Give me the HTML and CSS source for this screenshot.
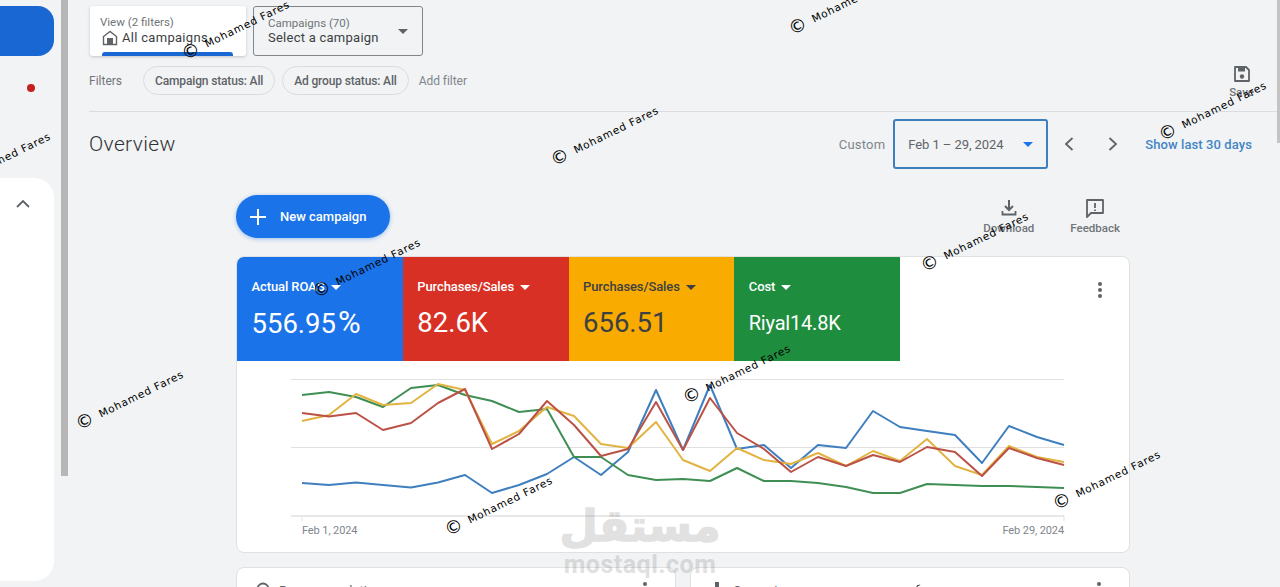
FILE: index.html
```html
<!DOCTYPE html>
<html lang="en">
<head>
  <meta charset="UTF-8">
  <meta name="viewport" content="width=device-width, initial-scale=1.0">
  <title>Overview - Campaigns</title>
  <link rel="stylesheet" href="styles.css">
</head>
<body>
  <div class="app">
    <div class="rail">
      <div class="rail-pill"></div>
      <div class="rail-dot"></div>
      <div class="rail-panel">
        <svg class="rail-chevron" width="16" height="10" viewBox="0 0 16 10"><path d="M2 8l6-6 6 6" fill="none" stroke="#5f6368" stroke-width="1.8"/></svg>
      </div>
    </div>
    <div class="rail-bar"></div>

    <div class="main">
      <div class="picker-row">
        <div class="view-card">
          <div class="small-label">View (2 filters)</div>
          <div class="view-name">
            <svg width="16" height="16" viewBox="0 0 16 16"><path d="M8 1.5L1.5 6.5v8h13v-8z" fill="none" stroke="#5f6368" stroke-width="1.4"/><rect x="5" y="8" width="6" height="6.5" fill="#5f6368"/></svg>
            All campaigns
          </div>
          <div class="view-bar"></div>
        </div>
        <div class="campaign-select">
          <div>
            <div class="small-label">Campaigns (70)</div>
            <div class="select-value">Select a campaign</div>
          </div>
          <span class="caret caret-grey"></span>
        </div>
      </div>

      <div class="filter-row">
        <span class="filter-label">Filters</span>
        <span class="chip">Campaign status: All</span>
        <span class="chip">Ad group status: All</span>
        <span class="add-filter">Add filter</span>
        <div class="tool save-tool">
          <svg width="20" height="20" viewBox="0 0 20 20"><path d="M3 3h11l3 3v11H3z" fill="none" stroke="#5f6368" stroke-width="1.8" stroke-linejoin="round"/><rect x="6" y="4" width="7" height="3.5" fill="#5f6368"/><circle cx="10" cy="12.5" r="2.2" fill="#5f6368"/></svg>
          <span>Save</span>
        </div>
      </div>

      <div class="overview-row">
        <h1>Overview</h1>
        <span class="custom-label">Custom</span>
        <div class="date-box">
          <span>Feb 1 – 29, 2024</span>
          <span class="caret caret-blue"></span>
        </div>
        <svg class="pager" width="14" height="16" viewBox="0 0 14 16"><path d="M10.5 2L4 8l6.500 6" fill="none" stroke="#5f6368" stroke-width="1.8"/></svg>
        <svg class="pager" width="14" height="16" viewBox="0 0 14 16"><path d="M3.500 2L10 8l-6.500 6" fill="none" stroke="#5f6368" stroke-width="1.800"/></svg>
        <a class="last-days">Show last 30 days</a>
      </div>

      <div class="content">
        <div class="action-row">
          <button class="new-campaign">
            <svg width="16" height="16" viewBox="0 0 16 16"><path d="M8 0v16M0 8h16" stroke="#fff" stroke-width="2"/></svg>
            New campaign
          </button>
          <div class="tools">
            <div class="tool">
              <svg width="20" height="20" viewBox="0 0 20 20"><path d="M10 2v9M6 8l4 4 4-4" fill="none" stroke="#5f6368" stroke-width="2"/><path d="M3.500 13v3.500h13V13" fill="none" stroke="#5f6368" stroke-width="1.800"/></svg>
              <span>Download</span>
            </div>
            <div class="tool">
              <svg width="20" height="20" viewBox="0 0 20 20"><path d="M2 2h16v13H6l-4 4z" fill="none" stroke="#5f6368" stroke-width="1.800" stroke-linejoin="round"/><path d="M10 5v5M10 11.500v1.500" stroke="#5f6368" stroke-width="1.800"/></svg>
              <span>Feedback</span>
            </div>
          </div>
        </div>

        <div class="chart-card">
          <div class="metric-row">
            <div class="metric metric-blue">
              <div class="metric-name">Actual ROAS <span class="caret"></span></div>
              <div class="metric-value">556.95<span class="percent">%</span></div>
            </div>
            <div class="metric metric-red">
              <div class="metric-name">Purchases/Sales <span class="caret"></span></div>
              <div class="metric-value">82.6K</div>
            </div>
            <div class="metric metric-yellow">
              <div class="metric-name">Purchases/Sales <span class="caret"></span></div>
              <div class="metric-value">656.51</div>
            </div>
            <div class="metric metric-green">
              <div class="metric-name">Cost <span class="caret"></span></div>
              <div class="metric-value metric-value-small">Riyal14.8K</div>
            </div>
            <div class="kebab"><i></i><i></i><i></i></div>
          </div>

          <svg class="chart" width="892" height="161" viewBox="237 361 892 161">
            <g stroke="#e0e0e0" stroke-width="1">
              <path d="M291 379.500H1064"/>
              <path d="M291 447.500H1064"/>
              <path d="M291 516H1064" stroke-width="1.500"/>
              <path d="M302 516v5M1064 516v5"/>
            </g>
            <g fill="none" stroke-width="2" stroke-linejoin="round">
              <polyline stroke="#3f7fbf" points="302,483 329,485 356,482.500 383,485 411,487.500 438,482.500 465,475 492,493 519,485 547,474 574,457 601,475 628,452 656,390 683,450 710,385 737,449 764,445 791,468 818,445 846,448 873,411 900,427 927,431 955,435 982,463 1009,426 1037,437 1064,445"/>
              <polyline stroke="#3f8f55" points="302,395 329,392 356,397 383,407 411,388 438,385 465,395 492,401 519,412 547,409 574,457 601,457 628,475 656,480 683,479 710,481 737,468 764,481 791,481 818,483 846,487 873,493 900,493 927,484 955,485 982,486 1009,486 1037,487 1064,488"/>
              <polyline stroke="#e3b341" points="302,421 329,415 356,394 383,405 411,403 438,384 465,390 492,444 519,431 547,407 574,416 601,444 628,448 656,422 683,460 710,471 737,448 764,460 791,464 818,453 846,466 873,451 900,461 927,439 955,466 982,475 1009,446 1037,457 1064,462"/>
              <polyline stroke="#bb5245" points="302,413 329,416.500 356,413 383,430 411,423 438,403 465,389 492,449 519,434 547,401 574,425 601,456 628,449 656,402 683,450 710,398 737,433 764,449 791,472 818,457 846,466 873,455 900,462 927,447 955,452 982,476 1009,448 1037,458 1064,465"/>
            </g>
          </svg>
          <div class="chart-dates">
            <span>Feb 1, 2024</span>
            <span>Feb 29, 2024</span>
          </div>
        </div>

        <div class="bottom-cards">
          <div class="mini-card">
            <svg width="16" height="16" viewBox="0 0 16 16"><circle cx="8" cy="7" r="5.500" fill="none" stroke="#5f6368" stroke-width="1.800"/></svg>
            <span>Recommendations</span>
            <div class="kebab"><i></i><i></i><i></i></div>
          </div>
          <div class="mini-card">
            <svg width="16" height="16" viewBox="0 0 16 16"><rect x="6" y="0" width="4" height="16" fill="#5f6368"/></svg>
            <span>Campaigns</span>
            <div class="kebab"><i></i><i></i><i></i></div>
          </div>
        </div>
      </div>
    </div>
  </div>

  <div class="scroll-thumb"></div>

  <div class="site-mark">
    <div class="site-mark-ar" lang="ar" dir="rtl">مستقل</div>
    <div class="site-mark-en">mostaql.com</div>
  </div>

  <span class="wm wm-1"><b>©</b>Mohamed Fares</span>
  <span class="wm wm-2"><b>©</b>Mohamed Fares</span>
  <span class="wm wm-3"><b>©</b>Mohamed Fares</span>
  <span class="wm wm-4"><b>©</b>Mohamed Fares</span>
  <span class="wm wm-5"><b>©</b>Mohamed Fares</span>
  <span class="wm wm-6"><b>©</b>Mohamed Fares</span>
  <span class="wm wm-7"><b>©</b>Mohamed Fares</span>
  <span class="wm wm-8"><b>©</b>Mohamed Fares</span>
  <span class="wm wm-9"><b>©</b>Mohamed Fares</span>
  <span class="wm wm-10"><b>©</b>Mohamed Fares</span>
  <span class="wm wm-11"><b>©</b>Mohamed Fares</span>
  <span class="wm wm-12"><b>©</b>Mohamed Fares</span>
</body>
</html>
```

FILE: styles.css
```css
* {
  box-sizing: border-box;
}
html, body {
  margin: 0;
  height: 587px;
  overflow: hidden;
}
body {
  position: relative;
  font-family: Roboto, "Liberation Sans", sans-serif;
  background: #f1f3f4;
  color: #3c4043;
}
.app {
  display: flex;
  height: 587px;
}

/* left rail */
.rail {
  width: 61px;
  flex: none;
  padding-top: 6px;
}
.rail-pill {
  width: 54px;
  height: 50px;
  background: #1967d2;
  border-radius: 0 16px 16px 0;
}
.rail-dot {
  width: 8px;
  height: 8px;
  margin: 28px 0 0 27px;
  background: #c5221f;
  border-radius: 50%;
}
.rail-panel {
  width: 54px;
  height: 403px;
  margin-top: 86px;
  padding: 21px 0 0 15px;
  background: #fff;
  border-radius: 0 20px 20px 0;
}
.rail-chevron {
  display: block;
}
.rail-bar {
  width: 7px;
  height: 476px;
  flex: none;
  background: #b6b6b6;
}

/* main column */
.main {
  flex: 1;
  min-width: 0;
  padding-left: 21px;
}
.picker-row {
  display: flex;
  gap: 7px;
  padding: 6px 0 0 1px;
}
.view-card {
  position: relative;
  width: 156px;
  height: 50px;
  padding: 9px 0 0 10px;
  background: #fff;
  border-radius: 3px;
  box-shadow: 0 1px 3px rgba(60,64,67,0.25);
  overflow: hidden;
}
.small-label {
  font-size: 11.5px;
  line-height: 14px;
  color: #70757a;
}
.view-name {
  display: flex;
  align-items: center;
  gap: 4px;
  margin: 0 0 0 2px;
  font-size: 13px;
  line-height: 18px;
  letter-spacing: 0.3px;
  color: #3c4043;
}
.view-bar {
  position: absolute;
  left: 12px;
  right: 13px;
  bottom: 0;
  height: 4px;
  background: #1967d2;
  border-radius: 3px 3px 0 0;
}
.campaign-select {
  display: flex;
  align-items: center;
  justify-content: space-between;
  width: 170px;
  height: 50px;
  padding: 0 14px 0 14px;
  border: 1px solid #80868b;
  border-radius: 3px;
}
.select-value {
  margin-top: -1px;
  font-size: 13px;
  line-height: 17px;
  letter-spacing: 0.25px;
}
.caret {
  display: inline-block;
  width: 0;
  height: 0;
  border-left: 5px solid transparent;
  border-right: 5px solid transparent;
  border-top: 5px solid currentColor;
  vertical-align: 2px;
  margin-left: 3px;
}
.caret-grey {
  color: #5f6368;
}
.caret-blue {
  color: #1a73e8;
}

.filter-row {
  display: flex;
  align-items: flex-start;
  height: 46px;
  margin-top: 10px;
  padding-right: 26px;
  border-bottom: 1px solid #dadce0;
  font-size: 12px;
}
.filter-label {
  width: 54px;
  line-height: 30px;
  color: #70757a;
}
.chip {
  height: 29px;
  margin-right: 7px;
  padding: 0 11px;
  line-height: 28px;
  font-weight: 500;
  letter-spacing: -0.15px;
  color: #5f6368;
  border: 1px solid #dadce0;
  border-radius: 15px;
}
.add-filter {
  margin-left: 3px;
  line-height: 30px;
  letter-spacing: -0.05px;
  color: #80868b;
}
.save-tool {
  margin: -2px 0 0 auto;
  gap: 7px;
}

.tool {
  display: flex;
  flex-direction: column;
  align-items: center;
  gap: 1px;
  font-size: 11.5px;
  line-height: 14px;
  font-weight: 500;
  color: #70757a;
}
.tool svg {
  display: block;
}

.overview-row {
  display: flex;
  align-items: center;
  height: 50px;
  margin-top: 7px;
  padding-right: 28px;
}
h1 {
  margin: 0 auto 0 0;
  font-size: 21px;
  font-weight: 300;
  letter-spacing: 0.35px;
  color: #2f3235;
}
.custom-label {
  margin-right: 8px;
  font-size: 13px;
  letter-spacing: 0.2px;
  color: #80868b;
}
.date-box {
  display: flex;
  align-items: center;
  justify-content: space-between;
  width: 155px;
  height: 50px;
  padding: 0 13px 0 13px;
  border: 2px solid #3f7fbf;
  border-radius: 3px;
  font-size: 13px;
  letter-spacing: -0.07px;
  color: #5f6368;
}
.pager {
  margin-left: 14px;
}
.pager + .pager {
  margin-left: 30px;
}
.last-days {
  margin-left: 25px;
  font-size: 13px;
  font-weight: 500;
  letter-spacing: 0.09px;
  color: #4285c4;
}

.content {
  width: 894px;
  margin: 26px 0 0 147px;
}
.action-row {
  display: flex;
  justify-content: space-between;
  height: 43px;
}
.new-campaign {
  display: flex;
  align-items: center;
  gap: 14px;
  width: 154px;
  padding: 0 0 0 14px;
  background: #1a73e8;
  color: #fff;
  border: none;
  border-radius: 22px;
  font: 500 13px Roboto, sans-serif;
  box-shadow: 0 1px 4px rgba(26,115,232,0.4);
}
.tools {
  display: flex;
  gap: 36px;
  padding: 3px 10px 0 0;
}
.tools .tool {
  gap: 3px;
}

/* chart card */
.chart-card {
  height: 297px;
  margin-top: 18px;
  background: #fff;
  border: 1px solid #e0e0e0;
  border-radius: 8px;
  overflow: hidden;
}
.metric-row {
  position: relative;
  display: flex;
  height: 104px;
}
.metric {
  width: 165.750px;
  padding: 22px 0 0 14.5px;
  color: #fff;
}
.metric-blue {
  background: #1a73e8;
}
.metric-red {
  background: #d93025;
}
.metric-yellow {
  background: #f9ab00;
  color: #3c4043;
}
.metric-green {
  background: #1e8e3e;
}
.metric-name {
  font-size: 13px;
  line-height: 16px;
  font-weight: 500;
  letter-spacing: -0.1px;
}
.metric-name .caret {
  margin-left: 3px;
  vertical-align: 1px;
}
.metric-value {
  margin-top: 11px;
  font-size: 27.5px;
  line-height: 34px;
}
.percent {
  margin-left: 2px;
  font-size: 31px;
}
.metric-value-small {
  font-size: 20px;
  letter-spacing: -0.2px;
}
.kebab {
  display: flex;
  flex-direction: column;
  gap: 2px;
  margin-left: auto;
}
.kebab i {
  display: block;
  width: 4px;
  height: 4px;
  background: #5f6368;
  border-radius: 50%;
}
.metric-row .kebab {
  padding: 25px 27px 0 0;
}
.chart {
  display: block;
}
.chart-dates {
  display: flex;
  justify-content: space-between;
  padding: 2px 65px 0;
  font-size: 11px;
  line-height: 14px;
  letter-spacing: -0.1px;
  color: #80868b;
}

.bottom-cards {
  display: grid;
  grid-template-columns: 440px 440px;
  gap: 14px;
  margin-top: 14px;
}
.mini-card {
  display: flex;
  align-items: flex-start;
  gap: 8px;
  height: 80px;
  padding: 14px 28px 0 18px;
  background: #fff;
  border: 1px solid #e0e0e0;
  border-radius: 8px;
  font-size: 13px;
  line-height: 16px;
  color: #5f6368;
}
.mini-card span {
  margin-top: 1px;
}

.scroll-thumb {
  position: absolute;
  top: 0;
  right: 0;
  width: 3px;
  height: 143px;
  background: #c4c4c4;
}

/* site mark and watermarks sit on top of the screenshot */
.site-mark {
  position: absolute;
  left: 550px;
  top: 498px;
  width: 180px;
  text-align: center;
  color: #6e6e6e;
  opacity: 0.2;
}
.site-mark-ar {
  font: bold 44px/56px "DejaVu Sans", sans-serif;
  -webkit-text-stroke: 1.5px #6e6e6e;
}
.site-mark-en {
  font: bold 25px/22px Roboto, sans-serif;
  letter-spacing: 0.5px;
}
.wm {
  position: absolute;
  font: 10.5px/16px "DejaVu Sans", sans-serif;
  letter-spacing: 0.8px;
  white-space: nowrap;
  color: #000;
  transform: rotate(-26deg);
  transform-origin: 7px 50%;
}
.wm b {
  margin-right: 7px;
  font-size: 18px;
  font-weight: 400;
  letter-spacing: 0;
  vertical-align: -2px;
}
.wm-1 { left: 182px; top: 44px; }
.wm-2 { left: 789px; top: 19px; }
.wm-3 { left: -57px; top: 176px; }
.wm-4 { left: 551px; top: 150px; }
.wm-5 { left: 1159px; top: 125px; }
.wm-6 { left: 313px; top: 282px; }
.wm-7 { left: 921px; top: 256px; }
.wm-8 { left: 76px; top: 414px; }
.wm-9 { left: 683px; top: 388px; }
.wm-10 { left: 445px; top: 520px; }
.wm-11 { left: 1053px; top: 494px; }
.wm-12 { left: 815px; top: 626px; }
```
